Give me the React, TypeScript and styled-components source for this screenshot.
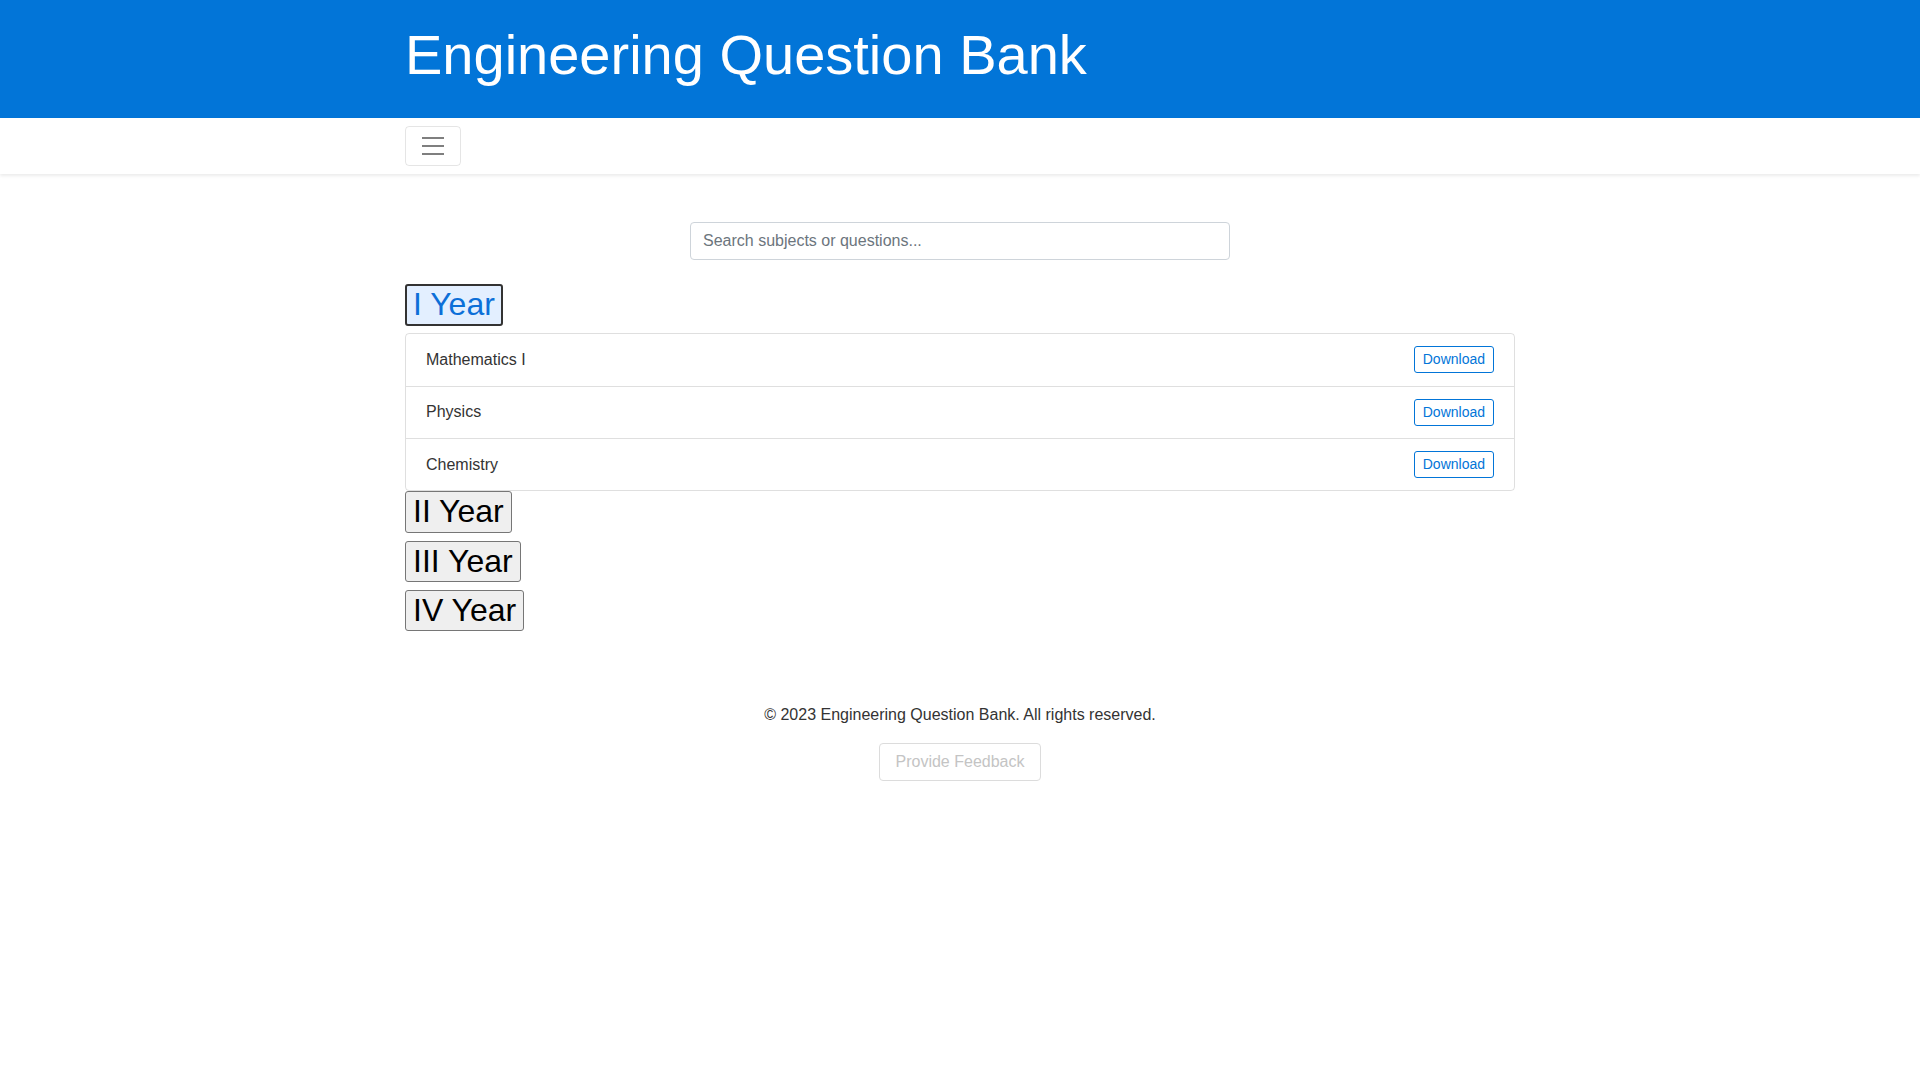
import React, { useState } from "react";
import styled, { createGlobalStyle } from "styled-components";

const GlobalStyle = createGlobalStyle`
  html, body { margin: 0; padding: 0; background: #fff; }
  body {
    font-family: "Liberation Sans", Arial, Helvetica, sans-serif;
    font-size: 16px;
    line-height: 1.5;
    color: #212529;
  }
  * { box-sizing: border-box; }
`;

const Container = styled.div`
  width: 1140px;
  margin: 0 auto;
  padding: 0 15px;
`;

const Header = styled.header`
  background: #0275d8;
  color: #fff;
  padding: 21px 0 30px;
`;

const Title = styled.h1`
  margin: 0;
  font-size: 56px;
  font-weight: 300;
  line-height: 1.2;
`;

const Navbar = styled.nav`
  background: #fff;
  padding: 8px 0;
  box-shadow: 0 2px 3px rgba(0, 0, 0, 0.08);
`;

const Toggler = styled.button`
  width: 56px;
  height: 40px;
  padding: 4px 12px;
  background: transparent;
  border: 1px solid rgba(0, 0, 0, 0.1);
  border-radius: 4px;
  display: flex;
  align-items: center;
  justify-content: center;
  cursor: pointer;
`;

const Main = styled.main`
  padding-top: 48px;
`;

const SearchRow = styled.div`
  display: flex;
  justify-content: center;
  margin-bottom: 24px;
`;

const SearchInput = styled.input`
  width: 540px;
  height: 38px;
  padding: 6px 12px;
  font-family: inherit;
  font-size: 16px;
  color: #495057;
  border: 1px solid #ced4da;
  border-radius: 4px;
  outline: none;
  &::placeholder { color: #6c757d; }
`;

const YearSection = styled.section`
  display: flex;
  flex-direction: column;
  align-items: flex-start;
`;

const YearButton = styled.button<{ $active?: boolean }>`
  font-family: "Liberation Sans", Arial, Helvetica, sans-serif;
  font-size: 32px;
  line-height: 35.5px;
  margin: 0 0 7.6px;
  padding: ${(p) => (p.$active ? "1px 6px" : "2px 7px")};
  border-radius: 3px;
  cursor: pointer;
  color: ${(p) => (p.$active ? "#0c6fd8" : "#000")};
  background: ${(p) => (p.$active ? "#e3efff" : "#efefef")};
  border: ${(p) => (p.$active ? "2px solid #333" : "1px solid #767676")};
`;

const ListGroup = styled.ul`
  align-self: stretch;
  list-style: none;
  margin: 0;
  padding: 0;
  border: 1px solid rgba(0, 0, 0, 0.125);
  border-radius: 4px;
`;

const ListItem = styled.li`
  display: flex;
  align-items: center;
  justify-content: space-between;
  padding: 12.2px 20px;
  color: #333;
  & + & { border-top: 1px solid rgba(0, 0, 0, 0.125); }
`;

const DownloadButton = styled.button`
  font-family: inherit;
  font-size: 14px;
  line-height: 21px;
  padding: 2px 8px;
  color: #0275d8;
  background: #fff;
  border: 1px solid #0275d8;
  border-radius: 3px;
  cursor: pointer;
`;

const Footer = styled.footer`
  margin-top: 64.5px;
  text-align: center;
`;

const FooterText = styled.p`
  margin: 0 0 16px;
  color: #333;
`;

const FeedbackButton = styled.button`
  font-family: inherit;
  font-size: 16px;
  line-height: 24px;
  padding: 6px 16px;
  color: #c4c4c4;
  background: #fff;
  border: 1px solid #dcdcdc;
  border-radius: 4px;
  cursor: pointer;
`;

const MenuIcon = () => (
  <svg width="30" height="30" viewBox="0 0 30 30">
    <path
      d="M4 7h22M4 15h22M4 23h22"
      stroke="rgba(0,0,0,0.5)"
      strokeWidth="2"
      strokeLinecap="butt"
      strokeMiterlimit="10"
    />
  </svg>
);

const years = [
  { name: "I Year", subjects: ["Mathematics I", "Physics", "Chemistry"] },
  { name: "II Year", subjects: [] },
  { name: "III Year", subjects: [] },
  { name: "IV Year", subjects: [] },
];

export default function App() {
  const [open, setOpen] = useState(0);
  return (
    <>
      <GlobalStyle />
      <Header>
        <Container>
          <Title>Engineering Question Bank</Title>
        </Container>
      </Header>
      <Navbar>
        <Container>
          <Toggler aria-label="Toggle navigation">
            <MenuIcon />
          </Toggler>
        </Container>
      </Navbar>
      <Main>
        <Container>
          <SearchRow>
            <SearchInput placeholder="Search subjects or questions..." />
          </SearchRow>
          {years.map((y, i) => (
            <YearSection key={y.name}>
              <YearButton $active={open === i} onClick={() => setOpen(i)}>
                {y.name}
              </YearButton>
              {open === i && y.subjects.length > 0 && (
                <ListGroup>
                  {y.subjects.map((s) => (
                    <ListItem key={s}>
                      <span>{s}</span>
                      <DownloadButton>Download</DownloadButton>
                    </ListItem>
                  ))}
                </ListGroup>
              )}
            </YearSection>
          ))}
        </Container>
      </Main>
      <Footer>
        <Container>
          <FooterText>© 2023 Engineering Question Bank. All rights reserved.</FooterText>
          <FeedbackButton>Provide Feedback</FeedbackButton>
        </Container>
      </Footer>
    </>
  );
}
